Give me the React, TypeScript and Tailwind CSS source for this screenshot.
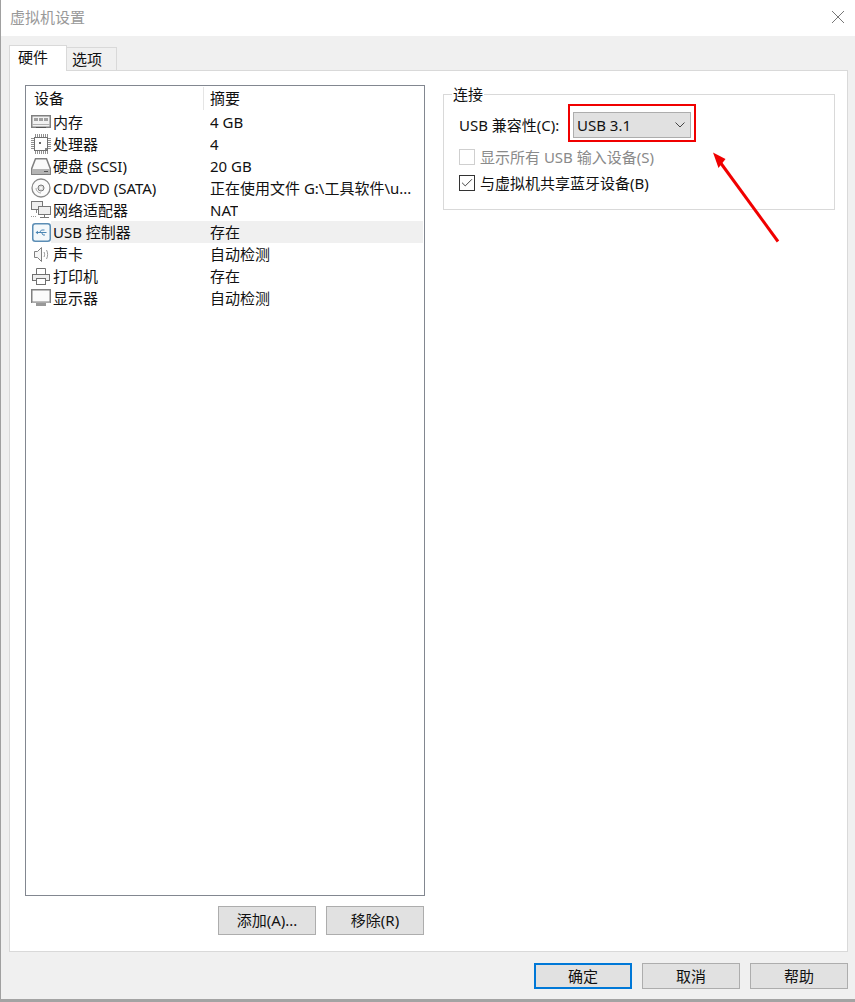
import React from 'react';
import { Check } from 'lucide-react';

const MemoryIcon = () => (
  <svg width="20" height="14" viewBox="0 0 20 14" fill="none">
    <rect x="0.750" y="0.750" width="18.500" height="11.500" fill="#f2f2f2" stroke="#808080" strokeWidth="1.500" />
    <path d="M3 3h4v3H3zM8 3h4v3H8zM13 3h4v3h-4z" fill="#a0a0a0" />
    <path d="M1 9.500h18" stroke="#b0b0b0" />
    <path d="M5 12.500h10" stroke="#555" />
  </svg>
);

const CpuIcon = () => (
  <svg width="20" height="20" viewBox="0 0 20 20" fill="none">
    <path
      d="M4.500 0v3M6.500 0v3M8.500 0v3M10.500 0v3M12.500 0v3M14.500 0v3M16.500 0v3M4.500 17v3M6.500 17v3M8.500 17v3M10.500 17v3M12.500 17v3M14.500 17v3M16.500 17v3M0 4.500h3M0 6.500h3M0 8.500h3M0 10.500h3M0 12.500h3M0 14.500h3M17 4.500h3M17 6.500h3M17 8.500h3M17 10.500h3M17 12.500h3M17 14.500h3"
      stroke="#909090"
    />
    <rect x="3.500" y="3.500" width="13" height="13" fill="#fff" stroke="#707070" />
    <rect x="8" y="8" width="2" height="2" fill="#666" />
    <rect x="14" y="14" width="2" height="2" fill="#888" />
  </svg>
);

const DiskIcon = () => (
  <svg width="20" height="17" viewBox="0 0 20 17" fill="none">
    <path d="M4.500 0.750h11l3.750 9.750v5.750H0.750V10.500z" fill="#fafafa" stroke="#808080" strokeWidth="1.500" />
    <rect x="1" y="11" width="18" height="5" fill="#b4b4b4" />
    <path d="M13 13.500h4" stroke="#555" />
  </svg>
);

const CdIcon = () => (
  <svg width="20" height="20" viewBox="0 0 20 20" fill="none">
    <circle cx="10" cy="10" r="9" fill="#fbfbfb" stroke="#8a8a8a" strokeWidth="1.300" />
    <circle cx="10" cy="10" r="3" fill="#ddd" stroke="#777" />
    <circle cx="10" cy="10" r="1" fill="#fff" />
    <path d="M5 10a5 5 0 0 0 5 5" stroke="#aaa" />
  </svg>
);

const NetworkIcon = () => (
  <svg width="20" height="19" viewBox="0 0 20 19" fill="none">
    <rect x="0.500" y="0.500" width="11" height="8" fill="#efefef" stroke="#777" />
    <rect x="7.500" y="5.500" width="12" height="8" fill="#efefef" stroke="#777" />
    <path d="M13.500 14v2M9 16.500h9" stroke="#777" />
    <path d="M5.500 9v3" stroke="#888" />
    <path d="M0 15.500h6" stroke="#999" strokeDasharray="1 1" />
  </svg>
);

const UsbIcon = () => (
  <svg width="19" height="19" viewBox="0 0 19 19" fill="none">
    <rect x="0.750" y="0.750" width="17.500" height="17.500" rx="2.500" fill="#f3f8fb" stroke="#5b8db5" strokeWidth="1.500" />
    <path d="M5 9.500h9.500M7.500 9.500l2-2.500h3M9.500 9.500l1.500 2.500h2" stroke="#4b86b4" />
    <path d="M3.500 9.500l2.500-1.800v3.600z" fill="#4b86b4" />
  </svg>
);

const SoundIcon = () => (
  <svg width="17" height="15" viewBox="0 0 17 15" fill="none">
    <path d="M1.500 4.500h3l4-4v14l-4-4h-3z" fill="#f5f5f5" stroke="#808080" />
    <path d="M11 5c.8 1.300.8 3.700 0 5M13.500 3c1.500 2.500 1.500 6.500 0 9" stroke="#999" />
  </svg>
);

const PrinterIcon = () => (
  <svg width="18" height="17" viewBox="0 0 18 17" fill="none" stroke="#707070">
    <path d="M4.500 6V0.500h9V6" fill="#fff" />
    <rect x="0.500" y="6.500" width="17" height="6" fill="#eee" />
    <rect x="4.500" y="10.500" width="9" height="6" fill="#fff" />
  </svg>
);

const MonitorIcon = () => (
  <svg width="20" height="18" viewBox="0 0 20 18" fill="none">
    <rect x="0.750" y="0.750" width="18.500" height="12.500" fill="#fbfbfb" stroke="#808080" strokeWidth="1.500" />
    <rect x="1" y="13" width="18" height="1" fill="#aaa" />
    <rect x="5" y="14" width="10" height="3" fill="#999" />
  </svg>
);

const devices = [
  { name: '内存', summary: '4 GB', icon: <MemoryIcon /> },
  { name: '处理器', summary: '4', icon: <CpuIcon /> },
  { name: '硬盘 (SCSI)', summary: '20 GB', icon: <DiskIcon /> },
  { name: 'CD/DVD (SATA)', summary: '正在使用文件 G:\\工具软件\\u...', icon: <CdIcon /> },
  { name: '网络适配器', summary: 'NAT', icon: <NetworkIcon /> },
  { name: 'USB 控制器', summary: '存在', icon: <UsbIcon />, selected: true },
  { name: '声卡', summary: '自动检测', icon: <SoundIcon /> },
  { name: '打印机', summary: '存在', icon: <PrinterIcon /> },
  { name: '显示器', summary: '自动检测', icon: <MonitorIcon /> },
];

const Btn: React.FC<{ label: string; focused?: boolean; tall?: boolean }> = ({ label, focused, tall }) => (
  <button
    className={`w-[98px] flex items-center justify-center bg-[#e1e1e1] text-[#111] ${tall ? 'h-[29px] pb-[2px]' : 'h-[26px]'} ${
      focused ? 'border-2 border-[#0078d7]' : 'border border-[#adadad]'
    }`}
  >
    {label}
  </button>
);

const App: React.FC = () => {
  return (
    <div
      lang="zh-CN"
      className="relative w-[855px] h-[1002px] flex flex-col overflow-hidden bg-[#f0f0f0] text-[15px] leading-[22px] text-[#111] border-b-[3px] border-b-[#a3a3a3]"
      style={{ fontFamily: '"Noto Sans", "Noto Sans CJK SC", sans-serif' }}
    >
      {/* title bar */}
      <div className="h-[36px] shrink-0 bg-white flex items-center justify-between pl-[10px] pr-[11px]">
        <span className="text-[#999] pb-[2px]">虚拟机设置</span>
        <svg width="12" height="12" viewBox="0 0 12 12" className="mb-[2px]" stroke="#777" fill="none">
          <path d="M0 0l12 12M12 0L0 12" />
        </svg>
      </div>

      {/* tabs */}
      <div className="flex items-end h-[34px] shrink-0 pl-[9px]">
        <div className="relative z-10 -mb-px w-[58px] h-[26px] bg-white border border-b-0 border-[#d9d9d9] pl-[8px]">硬件</div>
        <div className="w-[50px] h-[23px] bg-[#f0f0f0] border border-l-0 border-b-0 border-[#d9d9d9] pl-[5px]">选项</div>
      </div>

      {/* tab panel */}
      <div className="ml-[9px] w-[839px] h-[882px] shrink-0 bg-white border border-[#d9d9d9] flex">
        <div className="ml-[15px] mt-[14px] w-[400px] flex flex-col">
          <div className="h-[811px] border border-[#828790] p-px">
            <div className="flex h-[24px] items-start">
              <div className="w-[177px] pl-[7px] h-[23px] border-r border-[#e5e5e5]">设备</div>
              <div className="pl-[6px]">摘要</div>
            </div>
            {devices.map((d) => (
              <div key={d.name} className="flex h-[22px] items-center">
                <div className="w-[24px] pl-[4px] flex justify-center shrink-0">{d.icon}</div>
                <div className={`flex flex-1 h-full items-center ${d.selected ? 'bg-[#f0f0f0]' : ''}`}>
                  <div className="w-[159px] pl-[2px] shrink-0">{d.name}</div>
                  <div className="truncate">{d.summary}</div>
                </div>
              </div>
            ))}
          </div>
          <div className="flex justify-end gap-[10px] mt-[10px] pr-px">
            <Btn label="添加(A)..." tall />
            <Btn label="移除(R)" tall />
          </div>
        </div>

        {/* right group */}
        <div className="ml-[18px] mt-[23px] w-[392px] h-[116px] relative border border-[#d9d9d9] pl-[15px]">
          <span className="absolute left-[8px] -top-[12px] bg-white px-px">连接</span>
          <div className="flex items-center mt-[17px] h-[26px]">
            <span className="w-[114px] shrink-0 whitespace-nowrap">USB 兼容性(C):</span>
            <div className="relative w-[118px] h-[26px] flex items-center justify-between bg-[#e1e1e1] border border-[#adadad] pl-[3px] pr-[5px]">
              <span>USB 3.1</span>
              <svg width="10" height="6" viewBox="0 0 10 6" fill="none" stroke="#444">
                <path d="M0.500 0.500L5 5l4.500-4.500" />
              </svg>
              {/* red annotation box */}
              <div className="absolute -left-[6px] -top-[9px] w-[128px] h-[38px] border-2 border-[#f00000]" />
            </div>
          </div>
          <label className="flex items-center mt-[8px] h-[22px] text-[#8a8a8a]">
            <span className="w-[16px] h-[16px] border border-[#cfcfcf] mr-[5px]" />
            显示所有 USB 输入设备(S)
          </label>
          <label className="flex items-center mt-[4px] h-[22px]">
            <span className="w-[16px] h-[16px] border border-[#333] mr-[5px] flex items-center justify-center">
              <Check size={14} strokeWidth={1.7} color="#444" />
            </span>
            与虚拟机共享蓝牙设备(B)
          </label>
        </div>
      </div>

      {/* footer */}
      <div className="flex justify-end gap-[10px] pr-[7px] pt-[11px]">
        <Btn label="确定" focused />
        <Btn label="取消" />
        <Btn label="帮助" />
      </div>

      {/* window edge */}
      <div className="absolute left-0 top-0 w-px h-full bg-[#a0a0a0]" />

      {/* red annotation arrow */}
      <svg className="absolute left-[700px] top-[140px]" width="90" height="110" viewBox="0 0 90 110" fill="none">
        <path d="M78 101.500L20 22" stroke="#f00000" strokeWidth="3" />
        <path d="M13 12.500L25.500 19 18.500 28z" fill="#f00000" />
      </svg>
    </div>
  );
};

export default App;
